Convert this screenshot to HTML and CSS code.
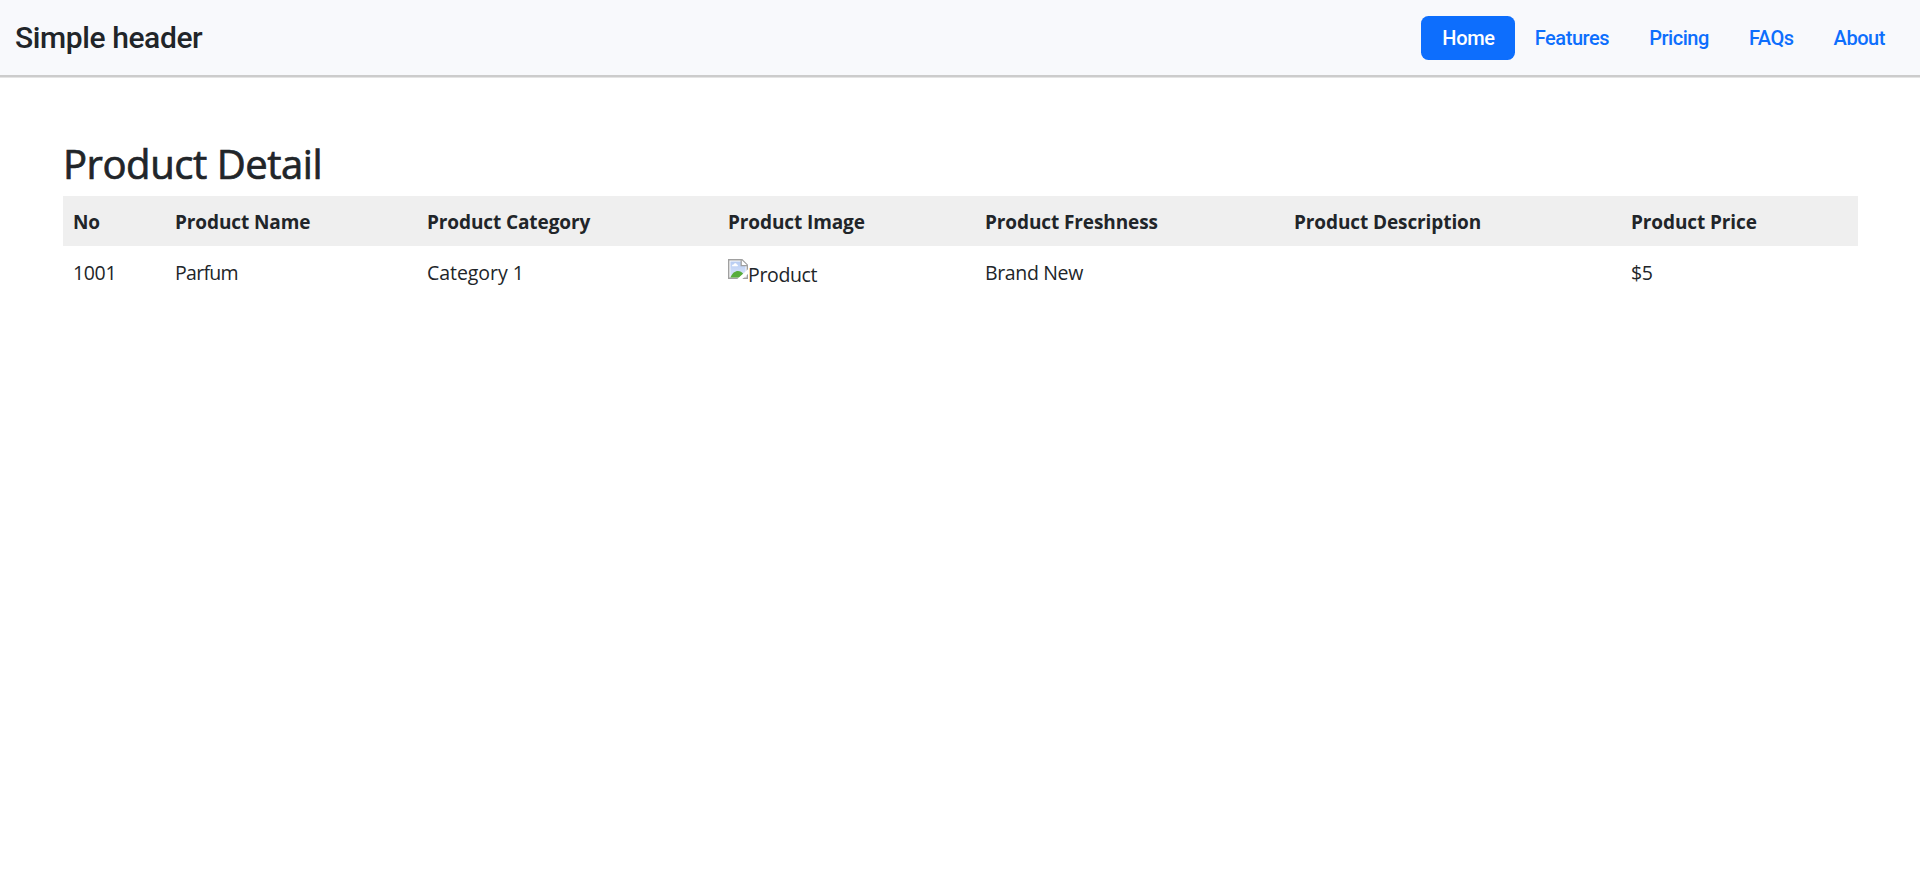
FILE: index.html
```html
<!DOCTYPE html>
<html lang="en">
<head>
<meta charset="utf-8">
<title>Product Detail</title>
<link rel="stylesheet" href="styles.css">
</head>
<body>
<header class="header">
  <a class="brand">Simple header</a>
  <nav class="nav">
    <a class="nav-link active">Home</a>
    <a class="nav-link">Features</a>
    <a class="nav-link">Pricing</a>
    <a class="nav-link">FAQs</a>
    <a class="nav-link">About</a>
  </nav>
</header>
<main class="content">
  <h1 class="title">Product Detail</h1>
  <table class="table">
    <colgroup>
      <col class="c-no"><col class="c-name"><col class="c-category"><col class="c-image"><col class="c-freshness"><col class="c-description"><col class="c-price">
    </colgroup>
    <thead>
      <tr><th>No</th><th>Product Name</th><th>Product Category</th><th>Product Image</th><th>Product Freshness</th><th>Product Description</th><th>Product Price</th></tr>
    </thead>
    <tbody>
      <tr>
        <td>1001</td><td class="name">Parfum</td><td class="category">Category 1</td>
        <td><span class="image"><svg class="broken" viewBox="0 0 20 20" width="20" height="20">
          <defs><linearGradient id="sky" x1="0" y1="0" x2="0" y2="1"><stop offset="0" stop-color="#b7ccf2"/><stop offset="1" stop-color="#dbe6fb"/></linearGradient></defs>
          <path d="M.7.7H14L19.3 6V19.3H.7Z" fill="#fff" stroke="#a0a0a0" stroke-width="1.4"/>
          <path d="M2.4 2.4H13V7H17.6V18H2.4Z" fill="url(#sky)"/>
          <path d="M4 7.2C4 5.8 5.2 5.5 5.8 5.6C6.2 3.8 8.6 3.9 8.8 5.6C10 5.5 10.3 7.2 9.5 7.2Z" fill="#fff"/>
          <path d="M2.4 18.6C4.2 14 7 12 10 12C12 12 14 13 15.4 15L11.5 18.6Z" fill="#57ad3b"/>
          <path d="M13.2.7V6.6H19.3" fill="#fff" stroke="#a0a0a0" stroke-width="1.3"/>
          <path d="M20 10.2L9.3 20H14.3L20 15Z" fill="#fff"/>
        </svg><span>Product</span></span></td>
        <td>Brand New</td><td></td><td>$5</td>
      </tr>
    </tbody>
  </table>
</main>
</body>
</html>
```
FILE: styles.css
```css
* { box-sizing: border-box; }
body { margin: 0; background: #fff; color: #212529; font-family: "Open Sans", "Noto Sans", sans-serif; font-size: 19.5px; line-height: 30px; }
.header { display: flex; justify-content: space-between; align-items: center; height: 78px; padding: 0 15px; background: #f8f9fc; border-bottom: 1px solid #e4e4e4; box-shadow: inset 0 -2px #ccc; font-family: Roboto, sans-serif; font-weight: 500; }
.brand { margin-bottom: 3px; font-size: 30px; line-height: 45px; letter-spacing: -0.4px; }
.nav { display: flex; margin-bottom: 1px; }
.nav-link { padding: 7px 20px; color: #0d6efd; font-size: 20px; line-height: 30px; border-radius: 7.5px; letter-spacing: -0.45px; }
.nav-link.active { padding: 7px 20px 7px 21px; background: #0d6efd; color: #fff; letter-spacing: -0.3px; }
.content { padding: 62px 62px 0 63px; }
.title { margin: 0 0 8px; font-size: 40px; line-height: 48px; font-weight: 500; letter-spacing: -0.45px; -webkit-text-stroke: 0.7px #212529; }
.table { width: 1795px; table-layout: fixed; border-collapse: collapse; }
.c-no { width: 102px; }
.c-name { width: 252px; }
.c-category { width: 301px; }
.c-image { width: 257px; }
.c-freshness { width: 309px; }
.c-description { width: 337px; }
.c-price { width: 237px; }
th, td { padding: 11px 10px 9px; text-align: left; vertical-align: top; white-space: nowrap; }
th { background: #efefef; font-size: 19px; font-weight: 700; letter-spacing: -0.1px; }
td { padding-top: 12px; letter-spacing: -0.35px; }
.name { letter-spacing: -0.7px; }
.category { letter-spacing: -0.05px; }
.image { display: flex; align-items: flex-start; }
.broken { display: block; margin: 1px 0 0; }
.image span { padding-top: 2px; }
```
